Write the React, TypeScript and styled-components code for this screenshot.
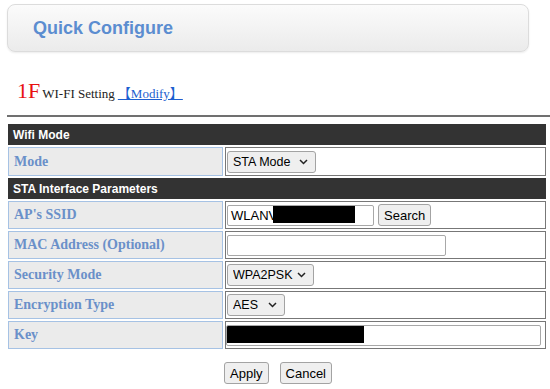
import React from "react";
import styled, { createGlobalStyle } from "styled-components";

const GlobalStyle = createGlobalStyle`
  body {
    margin: 0;
    background: #fff;
  }
`;

const Page = styled.div`
  width: 550px;
  box-sizing: border-box;
  padding: 4px 0 0 7px;
`;

const TitleBar = styled.div`
  width: 522px;
  height: 48px;
  box-sizing: border-box;
  display: flex;
  align-items: center;
  padding-left: 25px;
  border: 1px solid #dcdcdc;
  border-radius: 8px;
  background: linear-gradient(#fbfbfb, #ebebeb);
  box-shadow: 0 1px 2px rgba(0, 0, 0, 0.08);
`;

const Title = styled.h1`
  margin: 0;
  font: bold 18px "Liberation Sans", Arial, sans-serif;
  color: #5b8dd0;
`;

const FloorLine = styled.div`
  margin: 26px 0 0 10px;
  display: flex;
  align-items: baseline;
  font-family: "Liberation Serif", "Noto Sans CJK SC", serif;
  font-size: 13px;
  color: #222;
`;

const Floor = styled.span`
  font-size: 22px;
  color: #e81010;
  margin-right: 2px;
`;

const ModifyLink = styled.a`
  color: #1d5fd0;
  text-decoration: underline;
  margin-left: 3px;
  cursor: pointer;
`;

const Divider = styled.div`
  width: 543px;
  height: 2px;
  margin-top: 11px;
  background: #707070;
`;

const Table = styled.table`
  margin: 5px 0 0 -1px;
  width: 542px;
  table-layout: fixed;
  border-collapse: separate;
  border-spacing: 2px;
`;

const SectionRow = styled.tr`
  height: 21px;
`;

const SectionCell = styled.td`
  background: #333;
  color: #fff;
  font: bold 12px "Liberation Sans", Arial, sans-serif;
  padding: 0 0 0 5px;
`;

const FieldRow = styled.tr<{ $tall?: boolean }>`
  height: ${(p) => (p.$tall ? 29 : 28)}px;
`;

const LabelCell = styled.td`
  background: #ebebeb;
  border: 1px solid #a6c2e4;
  padding: 0 0 0 5px;
  font: bold 14px "Liberation Serif", Georgia, serif;
  color: #6a90c9;
`;

const ValueCell = styled.td`
  background: #fff;
  border: 1px solid #777;
  padding: 0 0 0 1px;
  font: 13px "Liberation Sans", Arial, sans-serif;
  color: #000;
`;

const Inline = styled.div`
  display: flex;
  align-items: center;
  gap: 4px;
`;

const SelectWrap = styled.div<{ $w: number }>`
  position: relative;
  width: ${(p) => p.$w}px;
  height: 22px;
`;

const Select = styled.select`
  appearance: none;
  width: 100%;
  height: 100%;
  box-sizing: border-box;
  padding: 0 0 0 5px;
  border: 1px solid #a3a3a3;
  border-radius: 3px;
  background: #efefef;
  font: 12.5px "Liberation Sans", Arial, sans-serif;
  color: #000;
`;

const Chevron = styled.svg`
  position: absolute;
  right: 8px;
  top: 8px;
  pointer-events: none;
`;

const TextBox = styled.div<{ $w: number; $flush?: boolean }>`
  width: ${(p) => p.$w}px;
  height: 21px;
  box-sizing: border-box;
  display: flex;
  align-items: center;
  padding-left: ${(p) => (p.$flush ? 0 : 3)}px;
  margin-left: ${(p) => (p.$flush ? -1 : 0)}px;
  border: 1px solid #a8a8a8;
  border-radius: 2px;
  background: #fff;
  overflow: hidden;
`;

const Redacted = styled.span<{ $w: number; $overlap?: number }>`
  display: block;
  width: ${(p) => p.$w}px;
  height: 17px;
  margin-left: ${(p) => -(p.$overlap ?? 0)}px;
  background: #000;
  align-self: flex-start;
`;

const Button = styled.button`
  height: 22px;
  box-sizing: border-box;
  padding: 0 5px;
  border: 1px solid #a3a3a3;
  border-radius: 3px;
  background: #efefef;
  font: 13px "Liberation Sans", Arial, sans-serif;
  color: #000;
`;

const Actions = styled.div`
  width: 542px;
  margin-top: 11px;
  display: flex;
  justify-content: center;
  gap: 11px;
`;

const Dropdown = ({ value, width }: { value: string; width: number }) => (
  <SelectWrap $w={width}>
    <Select defaultValue={value}>
      <option>{value}</option>
    </Select>
    <Chevron width="9" height="6" viewBox="0 0 9 6">
      <path d="M1 1l3.5 3.5L8 1" fill="none" stroke="#222" strokeWidth="1.5" />
    </Chevron>
  </SelectWrap>
);

export default function App() {
  return (
    <Page>
      <GlobalStyle />
      <TitleBar>
        <Title>Quick Configure</Title>
      </TitleBar>

      <FloorLine>
        <Floor>1F</Floor>
        WI-FI Setting
        <ModifyLink>【Modify】</ModifyLink>
      </FloorLine>

      <Divider />

      <Table>
        <colgroup>
          <col style={{ width: 215 }} />
          <col style={{ width: 321 }} />
        </colgroup>
        <tbody>
          <SectionRow>
            <SectionCell colSpan={2}>Wifi Mode</SectionCell>
          </SectionRow>
          <FieldRow $tall>
            <LabelCell>Mode</LabelCell>
            <ValueCell>
              <Dropdown value="STA Mode" width={89} />
            </ValueCell>
          </FieldRow>
          <SectionRow>
            <SectionCell colSpan={2}>STA Interface Parameters</SectionCell>
          </SectionRow>
          <FieldRow>
            <LabelCell>AP's SSID</LabelCell>
            <ValueCell>
              <Inline>
                <TextBox $w={147}>
                  WLANV
                  <Redacted $w={82} $overlap={4} />
                </TextBox>
                <Button>Search</Button>
              </Inline>
            </ValueCell>
          </FieldRow>
          <FieldRow>
            <LabelCell>MAC Address (Optional)</LabelCell>
            <ValueCell>
              <TextBox $w={219} />
            </ValueCell>
          </FieldRow>
          <FieldRow>
            <LabelCell>Security Mode</LabelCell>
            <ValueCell>
              <Dropdown value="WPA2PSK" width={87} />
            </ValueCell>
          </FieldRow>
          <FieldRow>
            <LabelCell>Encryption Type</LabelCell>
            <ValueCell>
              <Dropdown value="AES" width={58} />
            </ValueCell>
          </FieldRow>
          <FieldRow>
            <LabelCell>Key</LabelCell>
            <ValueCell>
              <TextBox $w={315} $flush>
                <Redacted $w={137} />
              </TextBox>
            </ValueCell>
          </FieldRow>
        </tbody>
      </Table>

      <Actions>
        <Button>Apply</Button>
        <Button>Cancel</Button>
      </Actions>
    </Page>
  );
}
